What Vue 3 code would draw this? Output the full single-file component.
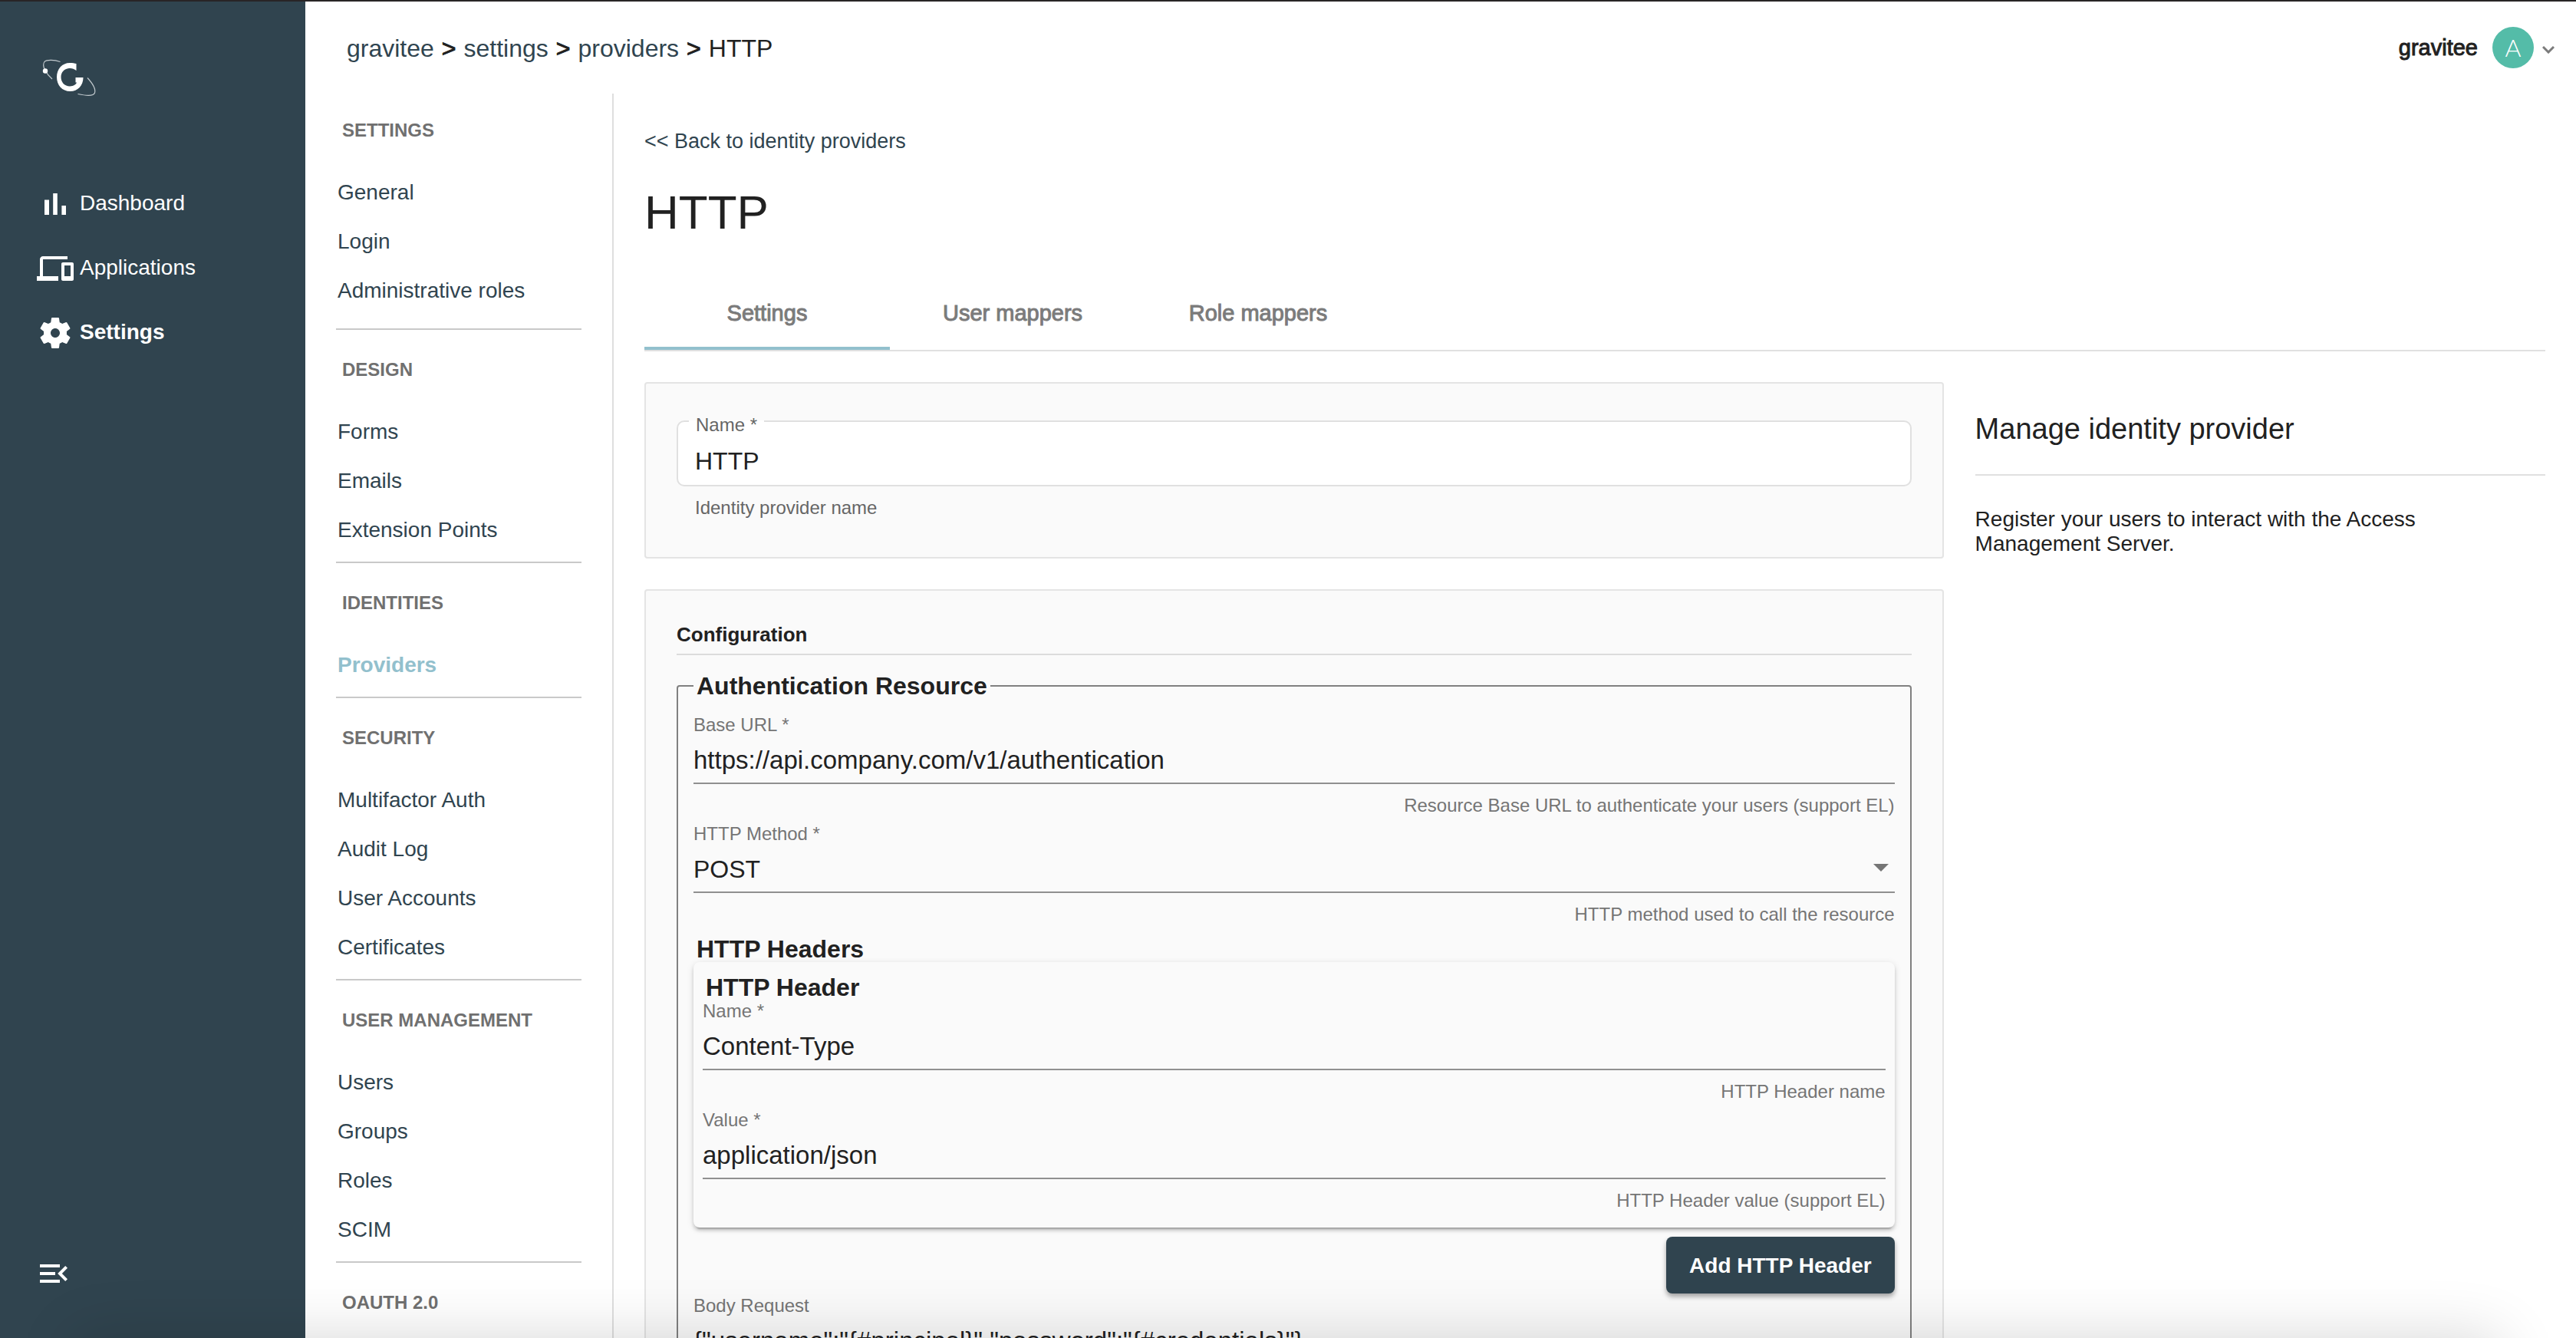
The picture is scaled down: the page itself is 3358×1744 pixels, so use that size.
<script setup>
import { ref } from 'vue'

const mainMenu = [
  { label: 'Dashboard', path: 'M5 9.2h3V19H5zM10.6 5h2.8v14h-2.8zm5.6 8H19v6h-2.8z' },
  {
    label: 'Applications',
    path: 'M4 6h16V4H4c-1.1 0-2 .9-2 2v11H0v3h14v-3H4V6zm19 2h-6c-.55 0-1 .45-1 1v10c0 .55.45 1 1 1h6c.55 0 1-.45 1-1V9c0-.55-.45-1-1-1zm-1 9h-4v-7h4v7z',
  },
  {
    label: 'Settings',
    active: true,
    path: 'M19.43 12.98c.04-.32.07-.64.07-.98s-.03-.66-.07-.98l2.11-1.65c.19-.15.24-.42.12-.64l-2-3.46c-.12-.22-.39-.3-.61-.22l-2.49 1c-.52-.4-1.08-.73-1.69-.98l-.38-2.65C14.46 2.18 14.25 2 14 2h-4c-.25 0-.46.18-.49.42l-.38 2.65c-.61.25-1.17.59-1.69.98l-2.49-1c-.23-.09-.49 0-.61.22l-2 3.46c-.13.22-.07.49.12.64l2.11 1.65c-.04.32-.07.65-.07.98s.03.66.07.98l-2.11 1.65c-.19.15-.24.42-.12.64l2 3.46c.12.22.39.3.61.22l2.49-1c.52.4 1.08.73 1.69.98l.38 2.65c.03.24.24.42.49.42h4c.25 0 .46-.18.49-.42l.38-2.65c.61-.25 1.17-.59 1.69-.98l2.49 1c.23.09.49 0 .61-.22l2-3.46c.12-.22.07-.49-.12-.64l-2.11-1.65zM12 15c-1.65 0-3-1.35-3-3s1.35-3 3-3 3 1.35 3 3-1.35 3-3 3z',
  },
]

const navGroups = [
  { title: 'SETTINGS', items: ['General', 'Login', 'Administrative roles'] },
  { title: 'DESIGN', items: ['Forms', 'Emails', 'Extension Points'] },
  { title: 'IDENTITIES', items: ['Providers'] },
  { title: 'SECURITY', items: ['Multifactor Auth', 'Audit Log', 'User Accounts', 'Certificates'] },
  { title: 'USER MANAGEMENT', items: ['Users', 'Groups', 'Roles', 'SCIM'] },
  { title: 'OAUTH 2.0', items: [] },
]
const activeItem = 'Providers'

const tabs = ['Settings', 'User mappers', 'Role mappers']
const activeTab = ref('Settings')

const form = ref({
  name: 'HTTP',
  baseUrl: 'https://api.company.com/v1/authentication',
  method: 'POST',
  headerName: 'Content-Type',
  headerValue: 'application/json',
  body: '{"username":"{#principal}","password":"{#credentials}"}',
})
</script>

<template>
  <div class="app">
    <aside class="sidebar">
      <a href="#" class="logo" aria-label="Home">
        <svg viewBox="0 0 100 80" width="100" height="80" fill="none">
          <path d="M38.500 20.500C31 18 21 17.500 18 20.500C16 23 16 26 18.500 31C20.500 35 24 39.500 28 43" stroke="#c3cbcf" stroke-width="1.200" />
          <circle cx="19" cy="32.500" r="3.200" fill="#fff" />
          <path d="M74 41.500C80 48 85 56 83.500 61C82 66 71 64.500 61.500 62.500" stroke="#c3cbcf" stroke-width="1.200" />
          <path d="M59.500 23V32C56.500 29.500 53 28.500 50 29C43.500 29.500 39.500 34.500 39.500 40.500C39.500 47.500 44.500 52.500 51 52.500C56 52.500 59.500 49.500 60 47.500H58.500V41H68.500C68.500 51.500 61.500 59 51.500 59C41 59 34 51 34 40.500C34 30 41 22 51 22C54.500 22 57.500 22.500 59.500 23Z" fill="#fff" />
        </svg>
      </a>
      <nav class="menu">
        <a v-for="m in mainMenu" :key="m.label" href="#" class="menu-link" :class="{ active: m.active }">
          <svg viewBox="0 0 24 24" width="48" height="48"><path :d="m.path" fill="#fff" /></svg>
          <span>{{ m.label }}</span>
        </a>
      </nav>
      <button class="collapse" type="button" aria-label="Collapse menu">
        <svg viewBox="0 0 24 24" width="48" height="48">
          <path d="M3 18h13v-2H3v2zM3 6v2h13V6H3zm0 7h10v-2H3v2zM21 15.590 17.420 12 21 8.410 19.590 7l-5 5 5 5L21 15.590z" fill="#fff" />
        </svg>
      </button>
    </aside>

    <div class="page">
      <header class="topbar">
        <nav class="crumbs">
          <a href="#">gravitee</a><span class="medium">&gt;</span>
          <a href="#">settings</a><span class="medium">&gt;</span>
          <a href="#">providers</a><span class="medium">&gt;</span>
          <span>HTTP</span>
        </nav>
        <button class="user" type="button">
          <span class="user-name medium">gravitee</span>
          <span class="avatar">A</span>
          <svg viewBox="0 0 16 16" width="16" height="16" fill="none">
            <path d="M1 7l7 7 7-7" stroke="#7b7b7b" stroke-width="3" />
          </svg>
        </button>
      </header>

      <div class="body">
        <nav class="subnav">
          <section v-for="g in navGroups" :key="g.title" class="group">
            <h2>{{ g.title }}</h2>
            <a v-for="i in g.items" :key="i" href="#" :class="{ current: i === activeItem }">{{ i }}</a>
          </section>
        </nav>

        <main class="content">
          <a href="#" class="back">&lt;&lt; Back to identity providers</a>
          <h1>HTTP</h1>
          <div class="tabs" role="tablist">
            <button
              v-for="t in tabs"
              :key="t"
              type="button"
              role="tab"
              class="tab medium"
              :class="{ selected: t === activeTab }"
              :aria-selected="t === activeTab"
              @click="activeTab = t"
            >
              {{ t }}
            </button>
          </div>

          <div class="columns">
            <form class="forms" @submit.prevent>
              <section class="card">
                <div class="outlined">
                  <label for="name">Name *</label>
                  <input id="name" v-model="form.name" type="text" />
                </div>
                <p class="outlined-hint">Identity provider name</p>
              </section>

              <section class="card">
                <h3>Configuration</h3>
                <fieldset>
                  <legend>Authentication Resource</legend>
                  <div class="field">
                    <label for="base-url">Base URL *</label>
                    <input id="base-url" v-model="form.baseUrl" type="text" />
                    <p>Resource Base URL to authenticate your users (support EL)</p>
                  </div>
                  <div class="field">
                    <label for="method">HTTP Method *</label>
                    <div class="select">
                      <select id="method" v-model="form.method">
                        <option>GET</option>
                        <option>POST</option>
                        <option>PUT</option>
                      </select>
                      <svg viewBox="0 0 20 10" width="20" height="10"><path d="M0 0h20L10 10z" fill="#757575" /></svg>
                    </div>
                    <p>HTTP method used to call the resource</p>
                  </div>

                  <h4 class="list-title">HTTP Headers</h4>
                  <div class="header-card">
                    <h4>HTTP Header</h4>
                    <div class="field">
                      <label for="header-name">Name *</label>
                      <input id="header-name" v-model="form.headerName" type="text" />
                      <p>HTTP Header name</p>
                    </div>
                    <div class="field">
                      <label for="header-value">Value *</label>
                      <input id="header-value" v-model="form.headerValue" type="text" />
                      <p>HTTP Header value (support EL)</p>
                    </div>
                  </div>
                  <div class="actions">
                    <button type="button" class="primary">Add HTTP Header</button>
                  </div>

                  <div class="field">
                    <label for="body">Body Request</label>
                    <input id="body" v-model="form.body" type="text" />
                  </div>
                </fieldset>
              </section>
            </form>

            <aside class="info">
              <h2>Manage identity provider</h2>
              <p>Register your users to interact with the Access Management Server.</p>
            </aside>
          </div>
        </main>
      </div>
    </div>
    <div class="bottom-shade"></div>
  </div>
</template>

<style>
body {
  margin: 0;
}
</style>

<style scoped>
* {
  box-sizing: border-box;
}

.app {
  display: flex;
  height: 100vh;
  overflow: hidden;
  border-top: 2px solid #282526;
  background: #fff;
  color: #212121;
  font-family: "Liberation Sans", Arial, sans-serif;
  font-size: 28px;
}

h1, h2, h3, h4, p {
  margin: 0;
}

a {
  color: #30444f;
  text-decoration: none;
}

button, input, select {
  border: 0;
  padding: 0;
  background: none;
  color: inherit;
  font: inherit;
}

svg {
  display: block;
  flex: none;
}

.medium {
  -webkit-text-stroke: 1px currentColor;
}

/* Dark sidebar */
.sidebar {
  display: flex;
  flex: none;
  flex-direction: column;
  width: 398px;
  background: #30444f;
}

.logo {
  padding: 58px 40px 0;
}

.menu {
  flex: 1;
  padding: 84px 48px 0;
}

.menu-link {
  display: flex;
  align-items: center;
  gap: 8px;
  height: 84px;
  color: #fff;
}

.menu-link span {
  padding-bottom: 2px;
}

.menu-link.active {
  font-weight: 700;
}

.collapse {
  align-self: flex-start;
  margin: 0 46px 60px;
}

/* Top bar */
.page {
  display: flex;
  flex: 1;
  flex-direction: column;
  min-width: 0;
}

.topbar {
  display: flex;
  flex: none;
  align-items: center;
  justify-content: space-between;
  height: 120px;
  padding: 0 28px 0 54px;
}

.crumbs {
  display: flex;
  gap: 10px;
  padding-top: 2px;
  font-size: 32px;
}

.user {
  display: flex;
  align-items: center;
}

.user-name {
  margin-right: 19px;
  font-size: 29px;
}

.avatar {
  width: 54px;
  height: 54px;
  margin-right: 11px;
  border-radius: 50%;
  background: #54bca8;
  color: #fff;
  font: 300 32px/54px Lato, sans-serif;
  text-align: center;
}

/* Settings navigation */
.body {
  display: flex;
  flex: 1;
  min-height: 0;
}

.subnav {
  flex: none;
  width: 402px;
  padding: 34px 40px 0;
  border-right: 2px solid #dedede;
  overflow: hidden;
}

.group {
  padding-bottom: 10px;
}

.group:first-child {
  padding-bottom: 18px;
}

.group + .group {
  padding-top: 38px;
  border-top: 2px solid #c9c9c9;
}

.group h2 {
  margin-bottom: 34px;
  padding-left: 8px;
  color: #707070;
  font-size: 24px;
  line-height: 28px;
}

.group a {
  display: block;
  padding: 2px 0 0 2px;
  line-height: 62px;
}

.group a.current {
  color: #92c0cd;
  font-weight: 700;
}

/* Content */
.content {
  flex: 1;
  min-width: 0;
  padding: 46px 40px 0;
  overflow: hidden;
}

.back {
  display: block;
  font-size: 27px;
  line-height: 32px;
}

h1 {
  margin: 41px 0 47px;
  font-size: 62px;
  font-weight: 400;
  line-height: 72px;
}

.tabs {
  display: flex;
  border-bottom: 2px solid #e0e0e0;
}

.tab {
  width: 320px;
  height: 96px;
  color: #7b7b7b;
  font-size: 29px;
}

.tab.selected {
  box-shadow: inset 0 -4px #92c0cd;
}

.columns {
  display: flex;
  align-items: flex-start;
  gap: 41px;
  margin-top: 40px;
}

.forms {
  display: flex;
  flex: 1;
  flex-direction: column;
  gap: 40px;
  min-width: 0;
}

.card {
  padding: 40px;
  border: 2px solid #e4e4e4;
  border-radius: 4px;
  background: #fafafa;
}

.outlined {
  position: relative;
  height: 86px;
  margin-top: 8px;
  border: 2px solid #e0e0e0;
  border-radius: 10px;
  background: #fff;
}

.outlined label {
  position: absolute;
  top: -10px;
  left: 14px;
  padding: 0 9px;
  background: linear-gradient(#fff, #fff) no-repeat bottom / 100% 20px;
  color: #666;
  font-size: 24px;
  line-height: 28px;
}

.outlined input {
  width: 100%;
  height: 100%;
  padding: 20px 22px 0;
  font-size: 32px;
}

.outlined-hint {
  margin: 14px 0 10px;
  padding-left: 24px;
  color: #666;
  font-size: 24px;
  line-height: 28px;
}

h3 {
  padding-bottom: 8px;
  border-bottom: 2px solid #dcdcdc;
  font-size: 26px;
  line-height: 34px;
}

fieldset {
  min-width: 0;
  margin: 23px 0 0;
  padding: 20px 20px;
  border: 2px solid #808080;
  border-radius: 4px;
}

legend, h4 {
  padding: 0 4px;
  font-size: 32px;
  font-weight: 700;
  line-height: 34px;
}

.field {
  display: flex;
  flex-direction: column;
  padding-bottom: 9px;
}

.field label, .field p {
  color: #757575;
  font-size: 24px;
  line-height: 28px;
}

.field p {
  margin-top: 14px;
  text-align: right;
}

.field input, .field select {
  width: 100%;
  height: 51px;
  padding-bottom: 10px;
  border-bottom: 2px solid #909090;
  border-radius: 0;
  font-size: 33px;
  appearance: none;
}

.field select {
  font-size: 32px;
}

.field input, .select {
  margin-top: 12px;
}

.select {
  position: relative;
}

.select svg {
  position: absolute;
  top: 13px;
  right: 8px;
}

.list-title {
  margin-top: 5px;
}

.header-card {
  padding: 16px 12px 12px;
  border-radius: 8px;
  box-shadow: 0 6px 2px -4px rgba(0, 0, 0, 0.2), 0 4px 4px rgba(0, 0, 0, 0.14), 0 2px 10px rgba(0, 0, 0, 0.12);
  background: #fafafa;
}

.actions {
  display: flex;
  justify-content: flex-end;
  margin: 12px 0 2px;
}

.primary {
  height: 74px;
  padding: 2px 30px 0;
  border-radius: 8px;
  box-shadow: 0 4px 6px rgba(0, 0, 0, 0.35);
  background: #30444f;
  color: #fff;
  font-weight: 700;
}

.info {
  flex: none;
  width: 30%;
}

.info h2 {
  padding: 37px 0 35px;
  border-bottom: 2px solid #e0e0e0;
  font-size: 38px;
  font-weight: 400;
  line-height: 48px;
}

.info p {
  margin-top: 41px;
  padding-right: 8px;
  line-height: 32px;
}

/* Soft shade along the bottom edge of the window */
.bottom-shade {
  position: fixed;
  bottom: -200px;
  left: 100px;
  right: 100px;
  height: 200px;
  box-shadow: 0 0 80px rgba(0, 0, 0, 0.16);
  pointer-events: none;
}
</style>
